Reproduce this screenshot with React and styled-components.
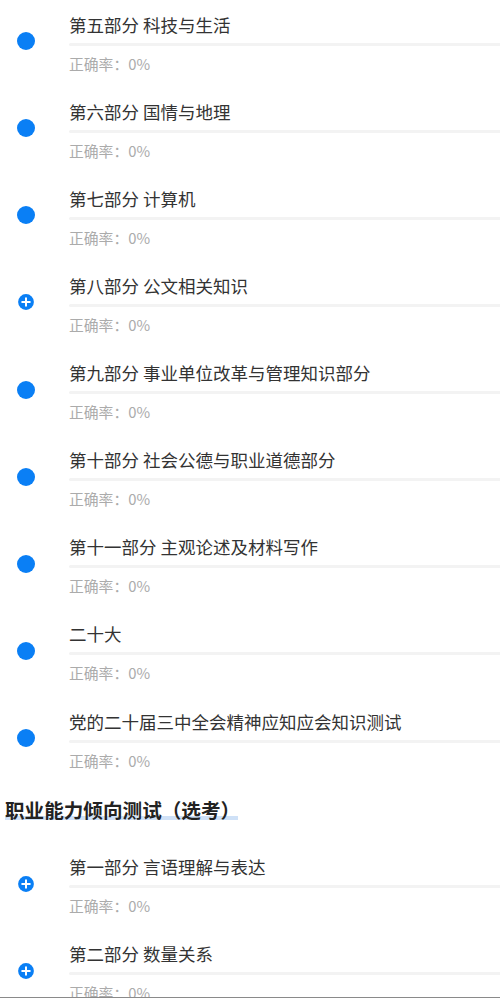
import React from "react";
import styled, { createGlobalStyle } from "styled-components";

const Global = createGlobalStyle`
  html, body { margin: 0; padding: 0; background: #fff; }
  body { font-family: "Noto Sans CJK SC", "Noto Sans", sans-serif; overflow: hidden; }
  * { box-sizing: border-box; }
`;

const Page = styled.div`
  width: 500px;
  display: flex;
  flex-direction: column;
`;

const Item = styled.div`
  height: 87.125px;
  display: flex;
  align-items: center;
`;

const IconCol = styled.div`
  width: 69px;
  flex: none;
  display: flex;
  justify-content: center;
  padding-right: 17px;
  margin-bottom: 5px;
`;

const Dot = styled.span`
  width: 18px;
  height: 18px;
  border-radius: 50%;
  background: #0a7ff5;
  display: block;
`;

const Content = styled.div`
  flex: 1;
  min-width: 0;
  display: flex;
  flex-direction: column;
`;

const Title = styled.div`
  font-size: 17.5px;
  line-height: 22px;
  color: #333;
  white-space: nowrap;
`;

const Bar = styled.div`
  height: 3px;
  margin-top: 7px;
  background: #f3f3f3;
  border-radius: 2px 0 0 2px;
`;

const Rate = styled.div`
  margin-top: 8px;
  font-size: 14.8px;
  line-height: 20px;
  color: #ababab;
`;

const Heading = styled.div`
  margin-top: 13px;
  margin-bottom: 18.5px;
  padding-left: 5px;
  line-height: 26px;
`;

const HeadingText = styled.span`
  display: inline-block;
  font-size: 19.6px;
  font-weight: 700;
  color: #222;
  background-image: linear-gradient(#cfe1f7, #cfe1f7);
  background-repeat: no-repeat;
  background-size: 233px 4px;
  background-position: 0 calc(100% - 3px);
`;

const Footer = styled.div`
  position: fixed;
  left: 0;
  right: 0;
  bottom: 0;
  height: 2px;
  background: #fff;
  border-top: 1px solid #8a8a8a;
`;

function PlusIcon() {
  return (
    <svg width="16" height="16" viewBox="0 0 16 16" style={{ display: "block" }}>
      <circle cx="8" cy="8" r="7.9" fill="#0a7ff5" />
      <path d="M8 4.2v7.6M4.2 8h7.6" stroke="#fff" strokeWidth="2" strokeLinecap="round" />
    </svg>
  );
}

function Row({ title, plus }) {
  return (
    <Item>
      <IconCol>{plus ? <PlusIcon /> : <Dot />}</IconCol>
      <Content>
        <Title>{title}</Title>
        <Bar />
        <Rate>正确率：0%</Rate>
      </Content>
    </Item>
  );
}

const first = [
  ["第五部分 科技与生活"],
  ["第六部分 国情与地理"],
  ["第七部分 计算机"],
  ["第八部分 公文相关知识", true],
  ["第九部分 事业单位改革与管理知识部分"],
  ["第十部分 社会公德与职业道德部分"],
  ["第十一部分 主观论述及材料写作"],
  ["二十大"],
  ["党的二十届三中全会精神应知应会知识测试"],
];

const second = [
  ["第一部分 言语理解与表达", true],
  ["第二部分 数量关系", true],
];

export default function App() {
  return (
    <>
      <Global />
      <Page>
        {first.map(([t, p]) => (
          <Row key={t} title={t} plus={p} />
        ))}
        <Heading>
          <HeadingText>职业能力倾向测试（选考）</HeadingText>
        </Heading>
        {second.map(([t, p]) => (
          <Row key={t} title={t} plus={p} />
        ))}
      </Page>
      <Footer />
    </>
  );
}
